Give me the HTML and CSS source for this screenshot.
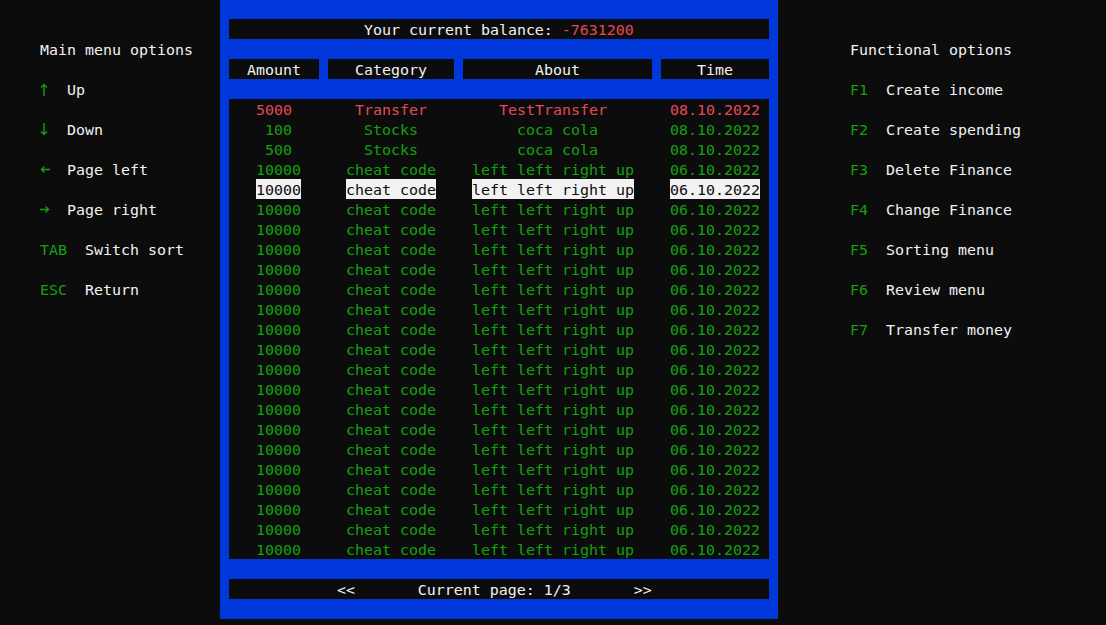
FILE: index.html
```html
<!DOCTYPE html>
<html>
<head>
<meta charset="utf-8">
<link rel="stylesheet" href="styles.css">
</head>
<body>
<div class="screen">
  <aside class="menu left">
    <div class="title">Main menu options</div>
    <div class="item"><span class="key k3 arrow"><svg width="8" height="13" viewBox="0 0 8 13"><path d="M4 13V1.5M1 4.5L4 1.5L7 4.5"/></svg></span><span>Up</span></div>
    <div class="item"><span class="key k3 arrow"><svg width="8" height="13" viewBox="0 0 8 13"><path d="M4 0V11.5M1 8.5L4 11.5L7 8.5"/></svg></span><span>Down</span></div>
    <div class="item"><span class="key k3 arrow"><svg width="10" height="7" viewBox="0 0 10 7"><path d="M10 3.5H1.5M4.5 0.5L1.5 3.5L4.5 6.5"/></svg></span><span>Page left</span></div>
    <div class="item"><span class="key k3 arrow"><svg width="10" height="7" viewBox="0 0 10 7"><path d="M0 3.5H8.5M5.5 0.5L8.5 3.5L5.5 6.5"/></svg></span><span>Page right</span></div>
    <div class="item"><span class="key k5">TAB</span><span>Switch sort</span></div>
    <div class="item"><span class="key k5">ESC</span><span>Return</span></div>
  </aside>

  <main class="panel">
    <div class="bar balance">Your current balance: <span class="red">-7631200</span></div>
    <div class="heads">
      <div class="head">  Amount</div>
      <div class="head">   Category</div>
      <div class="head">        About</div>
      <div class="head">    Time</div>
    </div>
    <div class="table">
      <div class="row red"><div>   <span>5000</span></div><div>   <span>Transfer</span></div><div>    <span>TestTransfer</span></div><div> <span>08.10.2022</span></div></div>
      <div class="row"><div>    <span>100</span></div><div>    <span>Stocks</span></div><div>      <span>coca cola</span></div><div> <span>08.10.2022</span></div></div>
      <div class="row"><div>    <span>500</span></div><div>    <span>Stocks</span></div><div>      <span>coca cola</span></div><div> <span>08.10.2022</span></div></div>
      <div class="row"><div>   <span>10000</span></div><div>  <span>cheat code</span></div><div> <span>left left right up</span></div><div> <span>06.10.2022</span></div></div>
      <div class="row sel"><div>   <span>10000</span></div><div>  <span>cheat code</span></div><div> <span>left left right up</span></div><div> <span>06.10.2022</span></div></div>
      <div class="row"><div>   <span>10000</span></div><div>  <span>cheat code</span></div><div> <span>left left right up</span></div><div> <span>06.10.2022</span></div></div>
      <div class="row"><div>   <span>10000</span></div><div>  <span>cheat code</span></div><div> <span>left left right up</span></div><div> <span>06.10.2022</span></div></div>
      <div class="row"><div>   <span>10000</span></div><div>  <span>cheat code</span></div><div> <span>left left right up</span></div><div> <span>06.10.2022</span></div></div>
      <div class="row"><div>   <span>10000</span></div><div>  <span>cheat code</span></div><div> <span>left left right up</span></div><div> <span>06.10.2022</span></div></div>
      <div class="row"><div>   <span>10000</span></div><div>  <span>cheat code</span></div><div> <span>left left right up</span></div><div> <span>06.10.2022</span></div></div>
      <div class="row"><div>   <span>10000</span></div><div>  <span>cheat code</span></div><div> <span>left left right up</span></div><div> <span>06.10.2022</span></div></div>
      <div class="row"><div>   <span>10000</span></div><div>  <span>cheat code</span></div><div> <span>left left right up</span></div><div> <span>06.10.2022</span></div></div>
      <div class="row"><div>   <span>10000</span></div><div>  <span>cheat code</span></div><div> <span>left left right up</span></div><div> <span>06.10.2022</span></div></div>
      <div class="row"><div>   <span>10000</span></div><div>  <span>cheat code</span></div><div> <span>left left right up</span></div><div> <span>06.10.2022</span></div></div>
      <div class="row"><div>   <span>10000</span></div><div>  <span>cheat code</span></div><div> <span>left left right up</span></div><div> <span>06.10.2022</span></div></div>
      <div class="row"><div>   <span>10000</span></div><div>  <span>cheat code</span></div><div> <span>left left right up</span></div><div> <span>06.10.2022</span></div></div>
      <div class="row"><div>   <span>10000</span></div><div>  <span>cheat code</span></div><div> <span>left left right up</span></div><div> <span>06.10.2022</span></div></div>
      <div class="row"><div>   <span>10000</span></div><div>  <span>cheat code</span></div><div> <span>left left right up</span></div><div> <span>06.10.2022</span></div></div>
      <div class="row"><div>   <span>10000</span></div><div>  <span>cheat code</span></div><div> <span>left left right up</span></div><div> <span>06.10.2022</span></div></div>
      <div class="row"><div>   <span>10000</span></div><div>  <span>cheat code</span></div><div> <span>left left right up</span></div><div> <span>06.10.2022</span></div></div>
      <div class="row"><div>   <span>10000</span></div><div>  <span>cheat code</span></div><div> <span>left left right up</span></div><div> <span>06.10.2022</span></div></div>
      <div class="row"><div>   <span>10000</span></div><div>  <span>cheat code</span></div><div> <span>left left right up</span></div><div> <span>06.10.2022</span></div></div>
      <div class="row"><div>   <span>10000</span></div><div>  <span>cheat code</span></div><div> <span>left left right up</span></div><div> <span>06.10.2022</span></div></div>
    </div>
    <div class="bar pager">            &lt;&lt;       Current page: 1/3       &gt;&gt;</div>
  </main>

  <aside class="menu right">
    <div class="title">Functional options</div>
    <div class="item"><span class="key k4">F1</span><span>Create income</span></div>
    <div class="item"><span class="key k4">F2</span><span>Create spending</span></div>
    <div class="item"><span class="key k4">F3</span><span>Delete Finance</span></div>
    <div class="item"><span class="key k4">F4</span><span>Change Finance</span></div>
    <div class="item"><span class="key k4">F5</span><span>Sorting menu</span></div>
    <div class="item"><span class="key k4">F6</span><span>Review menu</span></div>
    <div class="item"><span class="key k4">F7</span><span>Transfer money</span></div>
  </aside>
</div>
</body>
</html>
```

FILE: styles.css
```css
html, body {
  margin: 0;
  padding: 0;
  background: #0c0c0c;
  height: 100%;
  overflow: hidden;
}

body {
  font-family: "DejaVu Sans Mono", "Liberation Mono", monospace;
  font-size: 14.95px;
  line-height: 22px;
  color: #f2f2f2;
}

.screen {
  display: flex;
  align-items: flex-start;
  padding-left: 4px;
  margin-top: -1px;
}

.menu {
  display: flex;
  flex-direction: column;
  gap: 20px;
  padding-top: 40px;
}

.left {
  width: 180px;
  padding-left: 36px;
}

.right {
  padding-left: 72px;
}

.title,
.item,
.bar,
.head,
.row > div {
  white-space: pre;
  height: 20px;
}

.item {
  display: flex;
}

.key {
  color: #13a10e;
}

.arrow {
  display: flex;
  align-items: center;
  height: 20px;
}

.arrow svg {
  fill: none;
  stroke: #13a10e;
  stroke-width: 1.4;
}

.k3 { width: 27px; }
.k4 { width: 36px; }
.k5 { width: 45px; }

.panel {
  width: 540px;
  background: #0037da;
  padding: 20px 9px;
  display: flex;
  flex-direction: column;
  gap: 20px;
}

.bar {
  background: #0c0c0c;
}

.balance {
  padding-left: 135px;
}

.red {
  color: #e74856;
}

.heads {
  display: grid;
  grid-template-columns: 90px 126px 189px 108px;
  column-gap: 9px;
}

.head {
  background: #0c0c0c;
}

.table {
  background: #0c0c0c;
  color: #13a10e;
}

.row {
  display: grid;
  grid-template-columns: 90px 126px 189px 108px;
  column-gap: 9px;
  height: 20px;
}

.row.red {
  color: #e74856;
}

.row.sel span {
  display: inline-block;
  vertical-align: top;
  height: 20px;
  background: #f2f2f2;
  color: #0c0c0c;
}

.pager {
  color: #f2f2f2;
}
```
